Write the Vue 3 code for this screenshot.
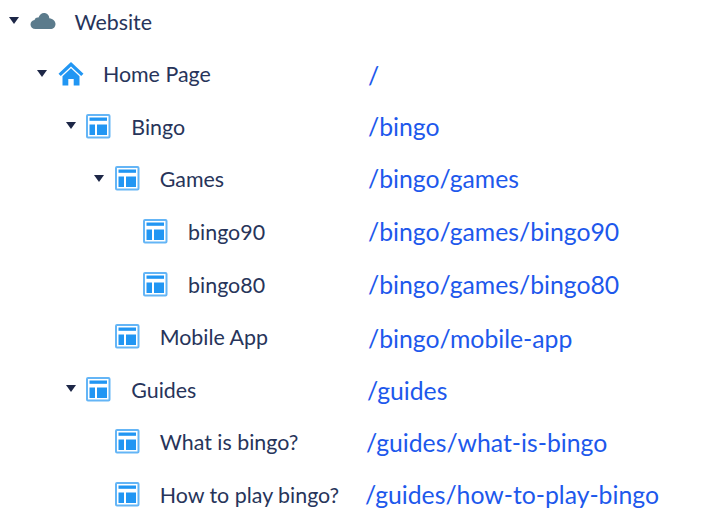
<script setup>
const rows = [
  { label: 'Website', icon: 'cloud', depth: 0, open: true, path: '' },
  { label: 'Home Page', icon: 'home', depth: 1, open: true, path: '/', pathX: 368, dy: 1 },
  { label: 'Bingo', icon: 'page', depth: 2, open: true, path: '/bingo', pathX: 368, dy: -1 },
  { label: 'Games', icon: 'page', depth: 3, open: true, path: '/bingo/games', pathX: 368, dy: -1 },
  { label: 'bingo90', icon: 'page', depth: 4, open: false, path: '/bingo/games/bingo90', pathX: 368, dy: -1 },
  { label: 'bingo80', icon: 'page', depth: 4, open: false, path: '/bingo/games/bingo80', pathX: 368, dy: -1 },
  { label: 'Mobile App', icon: 'page', depth: 3, open: false, path: '/bingo/mobile-app', pathX: 368, dy: 1 },
  { label: 'Guides', icon: 'page', depth: 2, open: true, path: '/guides', pathX: 367, dy: 0 },
  { label: 'What is bingo?', icon: 'page', depth: 3, open: false, path: '/guides/what-is-bingo', pathX: 366, dy: 0 },
  { label: 'How to play bingo?', icon: 'page', depth: 3, open: false, path: '/guides/how-to-play-bingo', pathX: 365, dy: -1 },
]
</script>

<template>
  <div class="tree">
    <div class="rows">
      <div v-for="row in rows" :key="row.label" class="row">
        <div class="node" :style="{ paddingLeft: 9 + row.depth * 28.4 + 'px' }">
          <span class="caret" :class="{ hidden: !row.open }"></span>
          <svg v-if="row.icon === 'cloud'" class="icon" viewBox="-0.5 -4 26 26">
            <path fill="#5b7b8c" d="M5 16C2 16 0 14 0 11.500 0 9 1.800 7.200 4 7 4.600 5 6.300 4.200 8 4.600 9 1.800 11 0 13.500 0 16.500 0 18.600 2.200 18.800 5.200 22.500 5.600 25 8 25 11 25 14 22.800 16 20 16z"/>
          </svg>
          <svg v-else-if="row.icon === 'home'" class="icon" viewBox="0 -1 26 26">
            <path fill="#2196f3" d="M13 0 25.500 11.800 23.200 14.100 13 4.500 2.800 14.100.5 11.800z"/>
            <path fill="#2196f3" d="M4.500 14.200 13 6.300l8.500 7.900v9.300h-5.800v-6.500h-5.400v6.500H4.500z"/>
          </svg>
          <svg v-else class="icon" viewBox="0 0 26 26">
            <rect x="1" y="1" width="22.500" height="22.500" rx="1" fill="#fff" stroke="#64b5f6" stroke-width="2"/>
            <rect x="3.500" y="3.500" width="17.500" height="3.300" fill="#2196f3"/>
            <rect x="3.500" y="10.500" width="5.500" height="10.500" fill="#2196f3"/>
            <rect x="11" y="10.500" width="10" height="10.500" fill="#2196f3"/>
          </svg>
          <span class="label">{{ row.label }}</span>
        </div>
        <a v-if="row.path" class="path" :style="{ left: row.pathX + 'px', marginTop: row.dy + 'px' }">{{ row.path }}</a>
      </div>
    </div>
  </div>
</template>

<style>
html, body { margin: 0; background: #fff; }
</style>

<style scoped>
.tree {
  width: 728px;
  height: 521px;
  overflow: hidden;
  background: #fff;
  font-family: Lato, sans-serif;
}
.rows {
  margin-top: -4.5px;
}
.row {
  position: relative;
  height: 52.55px;
  display: flex;
  align-items: center;
}
.node {
  display: flex;
  align-items: center;
  color: #27345a;
  font-size: 21.4px;
}
.caret {
  width: 0;
  height: 0;
  border-left: 5.25px solid transparent;
  border-right: 5.25px solid transparent;
  border-top: 7px solid #1d2747;
  margin-top: -2.6px;
}
.caret.hidden { visibility: hidden; }
.icon {
  width: 26px;
  height: 26px;
  margin-left: 10.500px;
  flex: none;
}
.label {
  margin-left: 19px;
  white-space: nowrap;
}
.path {
  position: absolute;
  top: 50%;
  transform: translateY(-50%);
  color: #1d58ec;
  font-size: 24.75px;
  white-space: nowrap;
}
</style>
